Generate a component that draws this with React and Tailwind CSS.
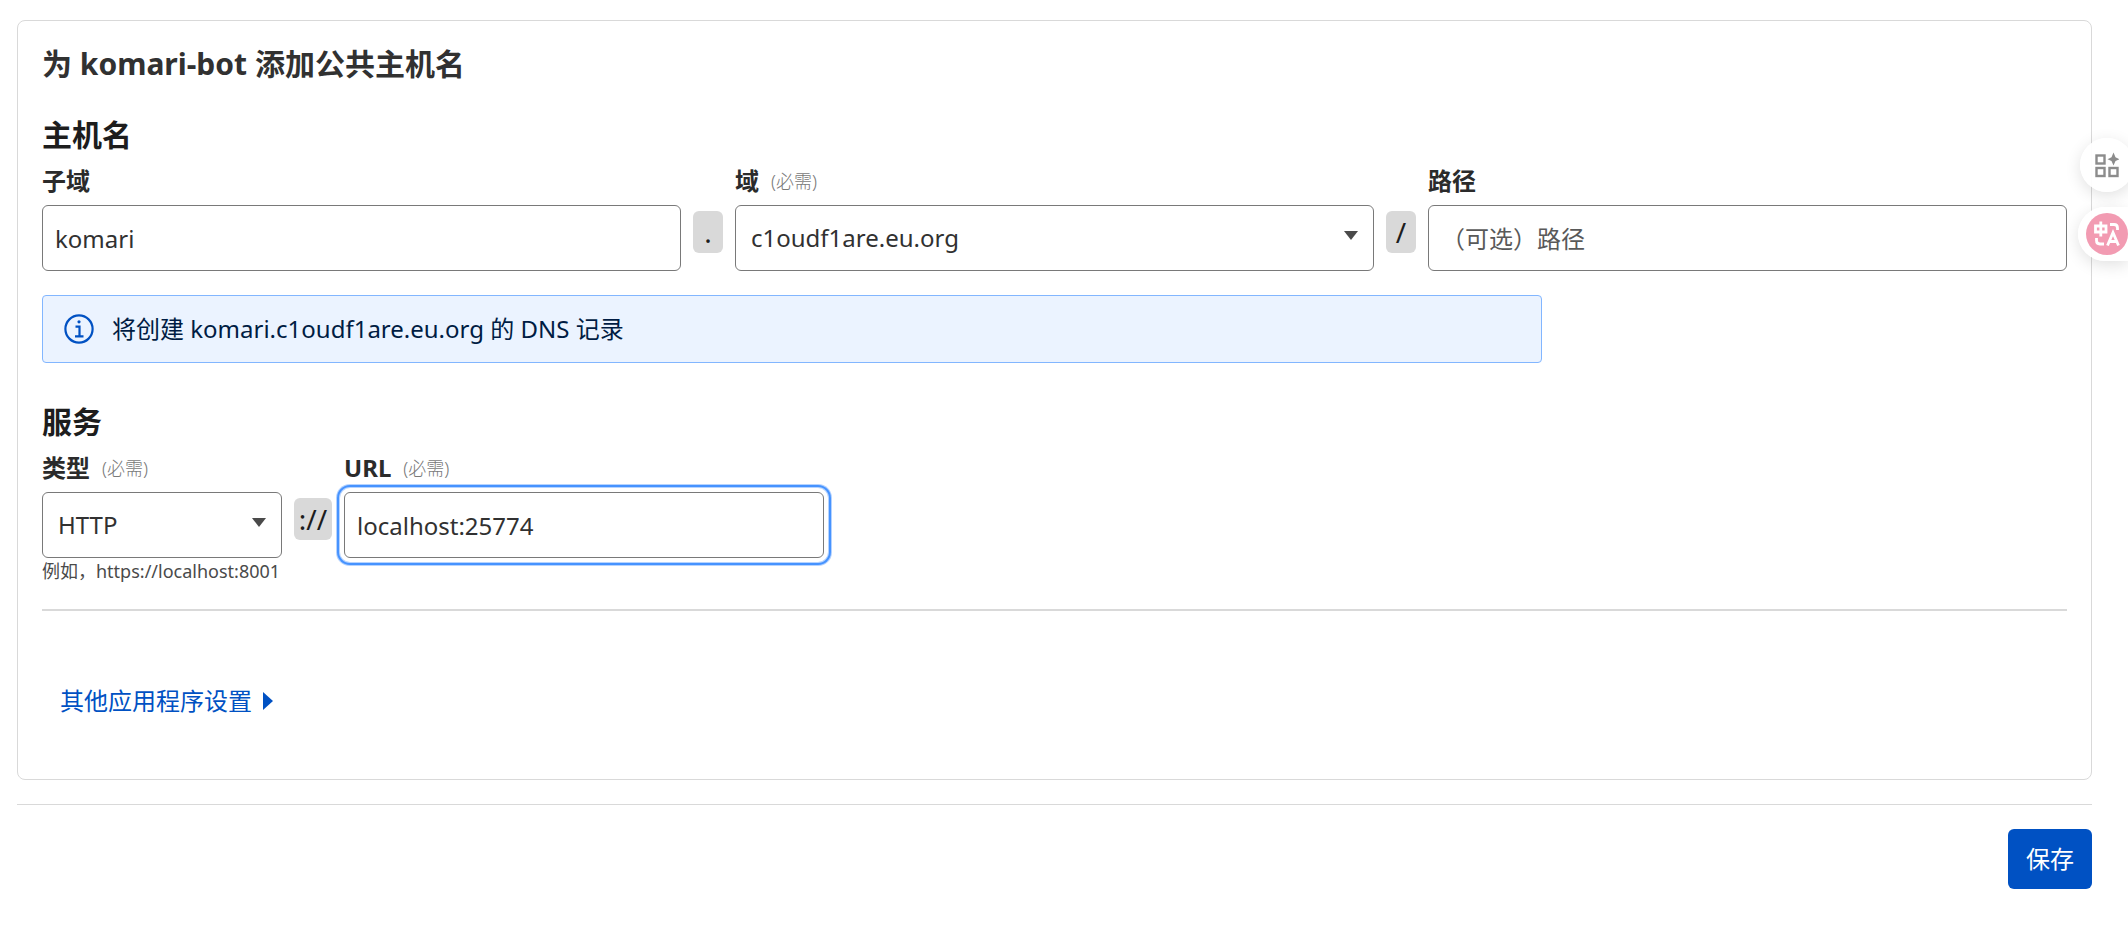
import { useState } from "react";

const inputClass =
    "block h-[66px] w-full rounded-md border border-[#797979] bg-white text-2xl text-[#313131] placeholder:text-[#595959] placeholder:opacity-100";

const Label = ({ htmlFor, required, children }) => (
    <label htmlFor={htmlFor} className="flex h-9 items-center gap-3 text-2xl font-bold whitespace-nowrap text-[#2b2b2b]">
        {children}
        {required && <span className="text-lg font-light text-[#797979]">(必需)</span>}
    </label>
);

const Separator = ({ wide, children }) => (
    <span
        className={`mt-12 flex h-[42px] shrink-0 items-center justify-center rounded-md bg-[#d9d9d9] text-[28px] text-[#1d1d1d] ${
            wide ? "w-[38px]" : "w-[30px]"
        }`}
    >
        {children}
    </span>
);

const Select = ({ id, value, onChange, options }) => (
    <div className="relative">
        <select id={id} value={value} onChange={onChange} className={`${inputClass} appearance-none pr-10 pl-[15px]`}>
            {options.map((option) => (
                <option key={option}>{option}</option>
            ))}
        </select>
        <svg viewBox="0 0 14 9" className="pointer-events-none absolute top-[26px] right-4 h-[9px] w-[14px]" aria-hidden="true">
            <path d="M0 0h14L7 9z" fill="#4a4a4a" />
        </svg>
    </div>
);

const InfoIcon = () => (
    <svg viewBox="0 0 30 30" className="h-[30px] w-[30px] shrink-0" fill="none" stroke="#0051c3" strokeWidth="2.2" aria-hidden="true">
        <circle cx="15" cy="15" r="13.6" />
        <path d="M11.5 12.6h4v9.6M11 22.4h8.5" />
        <circle cx="15" cy="7.8" r="1.6" fill="#0051c3" stroke="none" />
    </svg>
);

// Browser extension buttons docked to the right edge
const SideTools = () => (
    <div className="fixed top-[138px] right-0 flex flex-col items-end gap-[15px]">
        <button type="button" aria-label="工具" className="-mr-[6px] flex h-[54px] w-[54px] items-center justify-center rounded-full bg-white/95 shadow-[0_4px_16px_rgba(0,0,0,0.12)]">
            <svg viewBox="0 0 24 26" className="h-[26px] w-6" fill="none" stroke="#8c8c8c" strokeWidth="2.4" aria-hidden="true">
                <rect x="1.5" y="3.5" width="8" height="8" />
                <rect x="1.5" y="16" width="8" height="8" />
                <rect x="14.5" y="16" width="8" height="8" />
                <path d="M18.5 0.500l2 4.700L24.500 7.200l-4 1.800-2 4.500-2-4.500-4-1.800 4-2z" fill="#8c8c8c" stroke="none" />
            </svg>
        </button>
        <button type="button" aria-label="翻译" className="flex h-[54px] w-[50px] items-center rounded-l-full bg-white/95 pl-2 shadow-[0_4px_16px_rgba(0,0,0,0.12)]">
            <svg viewBox="0 0 42 42" className="h-[42px] w-[42px] shrink-0" fill="none" stroke="#fff" strokeWidth="2.8" aria-hidden="true">
                <circle cx="21" cy="21" r="21" fill="#f29bb2" stroke="none" />
                <path d="M9.5 13h10.500v6H9.500zM14.800 8.500v15M24 11.500h4q3.500 0 3.500 3.500v2M10.500 25v2.500q0 3.500 3.500 3.500h4M21.500 32.500l5.500-13 5.500 13M23.500 28.500h7" />
            </svg>
        </button>
    </div>
);

const App = () => {
    const [subdomain, setSubdomain] = useState("komari");
    const [domain, setDomain] = useState("c1oudf1are.eu.org");
    const [path, setPath] = useState("");
    const [type, setType] = useState("HTTP");
    const [url, setUrl] = useState("localhost:25774");

    return (
        <div className="min-h-screen bg-white pt-5 pr-9 pb-9 pl-[17px] font-['Noto_Sans','Noto_Sans_CJK_SC',sans-serif]">
            <form onSubmit={(e) => e.preventDefault()}>
                <div className="rounded-lg border border-[#d9d9d9] px-6 pt-5 pb-[58px]">
                    <h2 className="text-3xl leading-[46px] font-bold text-[#313131]">为 komari-bot 添加公共主机名</h2>

                    {/* Hostname */}
                    <h3 className="mt-6 text-3xl leading-[48px] font-bold text-[#1d1d1d]">主机名</h3>
                    <div className="mt-1 flex items-start gap-3">
                        <div className="flex-1">
                            <Label htmlFor="subdomain">子域</Label>
                            <div className="mt-1.5">
                                <input id="subdomain" className={`${inputClass} px-3`} value={subdomain} onChange={(e) => setSubdomain(e.target.value)} />
                            </div>
                        </div>
                        <Separator>.</Separator>
                        <div className="flex-1">
                            <Label htmlFor="domain" required>域</Label>
                            <div className="mt-1.5">
                                <Select id="domain" value={domain} onChange={(e) => setDomain(e.target.value)} options={["c1oudf1are.eu.org"]} />
                            </div>
                        </div>
                        <Separator>/</Separator>
                        <div className="flex-1">
                            <Label htmlFor="path">路径</Label>
                            <div className="mt-1.5">
                                <input id="path" className={`${inputClass} px-3`} placeholder="（可选）路径" value={path} onChange={(e) => setPath(e.target.value)} />
                            </div>
                        </div>
                    </div>

                    <div className="mt-6 flex h-[68px] max-w-[1500px] items-center gap-[18px] rounded border border-[#82b6ff] bg-[#ebf3ff] px-[21px] text-2xl text-[#001c43]">
                        <InfoIcon />
                        <p>将创建 {subdomain}.{domain} 的 DNS 记录</p>
                    </div>

                    {/* Service */}
                    <h3 className="mt-[35px] text-3xl leading-[48px] font-bold text-[#1d1d1d]">服务</h3>
                    <div className="mt-1 flex items-start gap-3">
                        <div className="w-60">
                            <Label htmlFor="type" required>类型</Label>
                            <div className="mt-1.5">
                                <Select id="type" value={type} onChange={(e) => setType(e.target.value)} options={["HTTP", "HTTPS", "TCP", "SSH"]} />
                            </div>
                            <p className="text-lg leading-[26px] whitespace-nowrap text-[#4a4a4a]">例如，https://localhost:8001</p>
                        </div>
                        <Separator wide>://</Separator>
                        <div className="w-[480px]">
                            <Label htmlFor="url" required>URL</Label>
                            <div className="mt-1.5">
                                <input
                                    id="url"
                                    className={`${inputClass} px-3 shadow-[0_0_0_4px_#fff,0_0_0_5px_#b5d3ff,0_0_0_7px_#4693ff,0_0_0_8px_#b5d3ff] outline-none`}
                                    value={url}
                                    onChange={(e) => setUrl(e.target.value)}
                                />
                            </div>
                        </div>
                    </div>

                    <hr className="mt-[25px] border-t-2 border-[#d9d9d9]" />

                    <button type="button" className="mt-[70px] ml-[18px] flex items-center gap-[11px] text-2xl leading-10 text-[#0051c3]">
                        其他应用程序设置
                        <svg viewBox="0 0 10 18" className="h-[18px] w-[10px]" aria-hidden="true">
                            <path d="M0 0l10 9-10 9z" fill="#0051c3" />
                        </svg>
                    </button>
                </div>

                <div className="mt-6 flex justify-end border-t border-[#d9d9d9] pt-6">
                    <button type="submit" className="h-[60px] rounded-md bg-[#0051c3] px-[18px] text-2xl text-white">保存</button>
                </div>
            </form>

            <SideTools />
        </div>
    );
};

export default App;
